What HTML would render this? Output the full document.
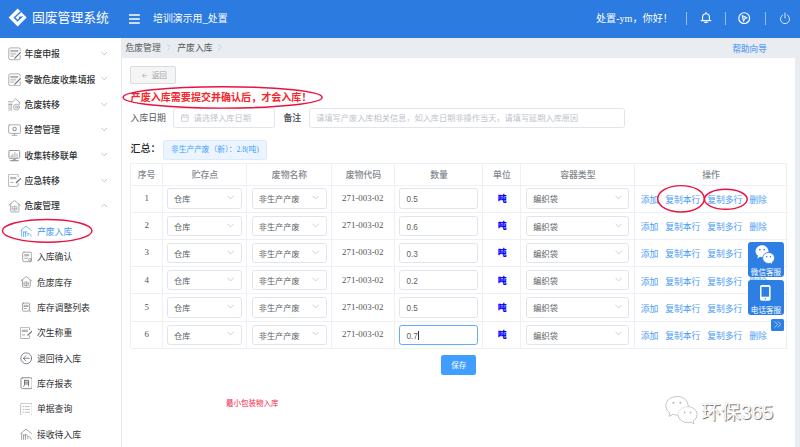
<!DOCTYPE html>
<html lang="zh-CN"><head>
<meta charset="utf-8">
<title>固废管理系统</title>
<style>
*{box-sizing:border-box;margin:0;padding:0}
html,body{width:800px;height:447px;overflow:hidden;background:#fff}
body{position:relative;font-family:"Liberation Sans","Noto Sans CJK SC",sans-serif;color:#333;font-size:8.9px;-webkit-font-smoothing:antialiased}
.serif{font-family:"Liberation Serif","Noto Sans CJK SC",sans-serif}
.abs{position:absolute}
/* header */
#hd{position:absolute;left:0;top:0;width:800px;height:37.6px;background:#2c7be0;color:#fff}
#hd .title{position:absolute;left:32px;top:0;line-height:36.6px;font-size:12.8px;font-weight:400;white-space:nowrap}
#hd .sys{position:absolute;left:153px;top:0;line-height:38.4px;font-size:9.9px;white-space:nowrap}
#hd .user{position:absolute;left:596px;top:0;line-height:37.4px;font-size:10.1px;white-space:nowrap}
#hd .dv{position:absolute;top:12.4px;width:1px;height:12.4px;background:rgba(255,255,255,.5)}
/* sidebar */
#sb{position:absolute;left:0;top:37.6px;width:122px;height:410px;background:#fff;border-right:1px solid #e6e9ee}
.mi{position:absolute;left:0;width:121px;height:25.37px;line-height:25.37px;font-size:8.85px;font-weight:500;color:#303133;white-space:nowrap}
.mi .tx{position:absolute;left:24.6px;top:1.1px}
.mi svg.ic{position:absolute;left:7.6px;top:6.2px;width:13.4px;height:13.4px}
.mi svg.ch{position:absolute;left:100.9px;top:9.7px;width:6.4px;height:5px}
.mi.sub{font-weight:400}
.mi.sub .tx{left:36.9px}
.mi.sub svg.ic{left:19.6px;top:6.5px;width:12.6px;height:12.6px}
.mi.act{color:#4495f3}
/* breadcrumb */
#bc{position:absolute;left:122px;top:37.6px;width:678px;height:20.2px;background:#e9edf2}
#bc span{position:absolute;top:0;line-height:21.2px;font-size:8.8px;color:#555;white-space:nowrap}
#bc .sep{color:#b8bcc4;font-size:8px}
#rs{position:absolute;left:795px;top:57.8px;width:5.6px;height:390px;background:#e9edf2}
/* content */
.btn-back{position:absolute;left:130.3px;top:66.4px;width:46.2px;height:17.7px;border:1px solid #dcdcdc;border-radius:2px;background:#f5f5f5;color:#a0a3a8;font-size:7.6px;line-height:15.6px;text-align:center;white-space:nowrap}
.warn{position:absolute;left:130.6px;top:88.5px;line-height:18px;font-size:10.05px;font-weight:700;color:#f8262a;white-space:nowrap}
.lb{position:absolute;font-size:8.85px;color:#53565c;font-weight:400;white-space:nowrap;line-height:20px}
.inp{position:absolute;height:20.4px;border:1px solid #e1e4ea;border-radius:2.6px;background:#fff;font-size:8.2px;line-height:19.8px;color:#c0c4cc;white-space:nowrap;overflow:hidden}
.sum{position:absolute;left:130.4px;top:138.5px;line-height:20px;font-size:10px;font-weight:500;color:#222;white-space:nowrap}
.tag{position:absolute;left:163px;top:139.8px;width:104px;height:20px;border:1px solid #d9ecff;background:#ecf5ff;border-radius:2.4px;color:#409eff;font-size:7.7px;line-height:18.6px;text-align:center;white-space:nowrap}
/* table */
#tb{position:absolute;left:129.5px;top:163.4px;width:657px;height:185px;border-top:1px solid #eceff4;border-left:1px solid #eceff4}
.vl{position:absolute;top:0;width:1px;height:185px;background:#eef0f5}
.hl{position:absolute;left:0;width:657px;height:1px;background:#eef0f5}
.th{position:absolute;top:0.6px;height:21px;line-height:21px;font-size:8.85px;color:#85888e;font-weight:500;text-align:center;white-space:nowrap}
.row{position:absolute;left:0;width:657px;height:27.24px}
.row .c{position:absolute;top:0;height:27.24px;line-height:27.24px;text-align:center;font-size:8.9px;color:#555;white-space:nowrap}
.sel,.num{position:absolute;top:3.6px;height:20.2px;border:1px solid #e1e4ea;border-radius:2.8px;background:#fff;font-size:8.2px;line-height:22.4px;color:#5c5f66;text-align:left;padding-left:6px;white-space:nowrap}
.sel svg{position:absolute;right:6.8px;top:5.8px;width:7.2px;height:5px}
.num{font-family:"Liberation Sans",sans-serif;padding-left:6.1px;line-height:21.6px}
.num.foc{border-color:#62adfb}
.ton{position:absolute;top:0;line-height:28.8px;font-size:8.9px;font-weight:900;color:#0808ff;text-align:center}
.lk{position:absolute;top:0;line-height:30.4px;font-size:8.8px;color:#4a9bf5;white-space:nowrap}
.save{position:absolute;left:441.2px;top:355.2px;width:35px;height:20.2px;border-radius:2.2px;background:#409eff;color:#fff;font-size:7.5px;line-height:21px;text-align:center}
.note{position:absolute;left:226px;top:396.9px;line-height:14px;font-size:7.5px;color:#f2254a;white-space:nowrap}
.fl{position:absolute;left:748.4px;width:35.2px;height:35px;background:#2d7fe3;border-radius:3px;color:#fff;font-size:7.6px;text-align:center;white-space:nowrap}
.fl span{position:absolute;left:0;width:100%;bottom:-1.5px;line-height:10.4px}
.wm{position:absolute;left:701.3px;top:398.4px;line-height:28px;font-size:19.6px;color:#fff;white-space:nowrap;text-shadow:1px 1px 0.700px #727272,0 0 0.800px #bdbdbd}
</style>
</head>
<body>
<!-- header -->
<div id="hd">
  <svg class="abs" style="left:8px;top:8px;width:20px;height:20px" viewBox="0 0 20 20"><path d="M9.6 0.6 18.6 9.6 9.6 18.6 0.6 9.6Z" fill="#fff"></path><path d="M12.7 3.7 6.5 9.5 9.5 12.7 13.3 9.2 10.9 9.4" fill="none" stroke="#2c7be0" stroke-width="1.45"></path></svg>
  <div class="title">固废管理系统</div>
  <svg class="abs" style="left:129.4px;top:13.8px;width:10.8px;height:10px" viewBox="0 0 10.8 10"><path d="M0 1h10.8M0 5h10.8M0 9h10.8" stroke="#fff" stroke-width="1.5"></path></svg>
  <div class="sys">培训演示用_处置</div>
  <div class="user serif">处置-ym，你好！</div>
  <div class="dv" style="left:685.5px"></div>
  <div class="dv" style="left:724.6px"></div>
  <div class="dv" style="left:765.2px"></div>
  <svg class="abs" style="left:699.7px;top:11.4px;width:12px;height:13px" viewBox="0 0 12 13"><path d="M1.2 9.6h9.6M2.6 9.4V6.1a3.4 3.4 0 0 1 6.8 0v3.3M6 1.2v1.4M4.8 11.4h2.4" fill="none" stroke="#fff" stroke-width="1.1" stroke-linecap="round"></path></svg>
  <svg class="abs" style="left:738.4px;top:11.6px;width:12.4px;height:12.4px" viewBox="0 0 12.4 12.4"><circle cx="6.2" cy="6.2" r="5.4" fill="none" stroke="#fff" stroke-width="1.150"></circle><path d="M4.100 3.500 9.300 5.800 6.600 6.700 5.600 9.500Z" fill="rgba(255,255,255,.35)" stroke="#fff" stroke-width="1" stroke-linejoin="round"></path></svg>
  <svg class="abs" style="left:778.8px;top:11.6px;width:12px;height:12.4px" viewBox="0 0 12 12.4"><path d="M3.6 3.1a4.6 4.6 0 1 0 4.8 0M6 1v5" fill="none" stroke="#dbe8fa" stroke-width="1" stroke-linecap="round"></path></svg>
</div>

<!-- sidebar -->
<div id="sb"></div>
<div id="menu"><div class="mi" style="top:41.10px"><svg class="ic" viewBox="0 0 13.4 13.4" fill="none" stroke="#94979d" stroke-width="0.8" stroke-linecap="round" stroke-linejoin="round"><path d="M12.200 8.800v2.400a1.500 1.500 0 0 1-1.500 1.500H2.300a1.500 1.500 0 0 1-1.500-1.500V2.400a1.500 1.500 0 0 1 1.500-1.500h8.400a1.500 1.500 0 0 1 1.500 1.500v1"></path><path d="M2.700 3.500h7.200M2.700 4.700h7.200M2.700 6.900h5.200M2.700 9.100h3.200"></path><path d="M12.400 5.700 6.900 11.200" stroke-width="1.200" stroke="#6a6d73"></path></svg><span class="tx">年度申报</span><svg class="ch" viewBox="0 0 6.4 5" fill="none" stroke="#b4b8bf" stroke-width="0.8"><path d="M0.400 1 3.200 3.800 6 1"></path></svg></div><div class="mi" style="top:66.47px"><svg class="ic" viewBox="0 0 13.4 13.4" fill="none" stroke="#94979d" stroke-width="0.8" stroke-linecap="round" stroke-linejoin="round"><path d="M12.200 8.800v2.400a1.500 1.500 0 0 1-1.500 1.500H2.300a1.500 1.500 0 0 1-1.500-1.500V2.400a1.500 1.500 0 0 1 1.500-1.500h8.400a1.500 1.500 0 0 1 1.500 1.500v1"></path><path d="M2.700 3.500h7.200M2.700 4.700h7.200M2.700 6.900h5.200M2.700 9.100h3.200"></path><path d="M12.400 5.700 6.900 11.200" stroke-width="1.200" stroke="#6a6d73"></path></svg><span class="tx">零散危废收集填报</span><svg class="ch" viewBox="0 0 6.4 5" fill="none" stroke="#b4b8bf" stroke-width="0.8"><path d="M0.400 1 3.200 3.800 6 1"></path></svg></div><div class="mi" style="top:91.84px"><svg class="ic" viewBox="0 0 13.4 13.4" fill="none" stroke="#94979d" stroke-width="0.8" stroke-linecap="round" stroke-linejoin="round"><path d="M0.400 3.800h4.200L7.650 0.800 11.900 4.700M11.300 4.400v2M0.700 6.200h3.400"></path><path d="M0.900 6.200v6.200M2.200 6.200v6.200M3.500 6.200v6.200" stroke-width="0.550"></path><circle cx="8.500" cy="9.200" r="2.900"></circle><circle cx="8.500" cy="9.200" r="1"></circle></svg><span class="tx">危废转移</span><svg class="ch" viewBox="0 0 6.4 5" fill="none" stroke="#b4b8bf" stroke-width="0.8"><path d="M0.400 1 3.200 3.800 6 1"></path></svg></div><div class="mi" style="top:117.21px"><svg class="ic" viewBox="0 0 13.4 13.4" fill="none" stroke="#94979d" stroke-width="0.8" stroke-linecap="round" stroke-linejoin="round"><rect x="0.650" y="1.850" width="11.750" height="8.500" rx="0.800"></rect><circle cx="6.600" cy="6" r="1.700" stroke-width="1.100"></circle><path d="M6.500 10.400v1.800M4 12.300h5"></path></svg><span class="tx">经营管理</span><svg class="ch" viewBox="0 0 6.4 5" fill="none" stroke="#b4b8bf" stroke-width="0.8"><path d="M0.400 1 3.200 3.800 6 1"></path></svg></div><div class="mi" style="top:142.58px"><svg class="ic" viewBox="0 0 13.4 13.4" fill="none" stroke="#94979d" stroke-width="0.8" stroke-linecap="round" stroke-linejoin="round"><rect x="0.900" y="1.500" width="10.800" height="7.800" rx="1" stroke-width="1"></rect><path d="M3.200 8.200V6.600M4.900 8.200V5.400M6.900 8.200V3.600M9 8.200V5"></path><path d="M5.200 10.200h2.400M2.600 11.600h7.600" stroke-width="1.100"></path></svg><span class="tx">收集转移联单</span><svg class="ch" viewBox="0 0 6.4 5" fill="none" stroke="#b4b8bf" stroke-width="0.8"><path d="M0.400 1 3.200 3.800 6 1"></path></svg></div><div class="mi" style="top:167.95px"><svg class="ic" viewBox="0 0 13.4 13.4" fill="none" stroke="#94979d" stroke-width="0.8" stroke-linecap="round" stroke-linejoin="round"><path d="M10.200 9.400v1.600a1.400 1.400 0 0 1-1.400 1.400H1.700a1.400 1.400 0 0 1-1.400-1.400V1.600a1.400 1.400 0 0 1 1.400-1.400h7.100a1.400 1.400 0 0 1 1.400 1.400v1.200"></path><path d="M2.400 3.400h5.500M2.400 4.700h5.500M2.600 8.400h2.400"></path><path d="M12.600 4.600 8.400 8.600" stroke-width="1.300" stroke="#6a6d73"></path></svg><span class="tx">应急转移</span><svg class="ch" viewBox="0 0 6.4 5" fill="none" stroke="#b4b8bf" stroke-width="0.8"><path d="M0.400 1 3.200 3.800 6 1"></path></svg></div><div class="mi" style="top:193.32px"><svg class="ic" viewBox="0 0 13.4 13.4" fill="none" stroke="#94979d" stroke-width="0.8" stroke-linecap="round" stroke-linejoin="round"><path d="M0.900 5.100 6.600 0.600 12.200 5.100M2.700 4.400v6.600a1 1 0 0 0 1 1h6.200a1 1 0 0 0 1-1V4.400"></path><path d="M4.600 6.600h4.200v3.400h-4.200zM4.600 8.400h4.200M6.700 5.800v4.800" stroke-width="0.600"></path></svg><span class="tx">危废管理</span><svg class="ch" viewBox="0 0 6.4 5" fill="none" stroke="#b4b8bf" stroke-width="0.8"><path d="M0.400 4 3.200 1.200 6 4"></path></svg></div><div class="mi sub act" style="top:218.69px"><svg class="ic" viewBox="0 0 13.4 13.4" fill="none" stroke="#4a9bf0" stroke-width="0.8" stroke-linecap="round" stroke-linejoin="round"><path d="M0.800 5.800 6.400 1.200 12 5.800M1.800 5.800v6.400M3.800 7.400v4.800M5.800 7.400v4.800M3.800 7.400h4M7.800 9.200h1.400M7.800 10.800h1M10.400 9.400 12 12"></path></svg><span class="tx">产废入库</span></div><div class="mi sub" style="top:244.06px"><svg class="ic" viewBox="0 0 13.4 13.4" fill="none" stroke="#85888e" stroke-width="0.8" stroke-linecap="round" stroke-linejoin="round"><rect x="2.870" y="1.280" width="9.570" height="10.100" rx="1.400"></rect><path d="M5 3.930h4.460M5 5.100h4.460M5 7.650h2.870"></path><circle cx="10.600" cy="9.350" r="1.500" fill="#fff"></circle></svg><span class="tx">入库确认</span></div><div class="mi sub" style="top:269.43px"><svg class="ic" viewBox="0 0 13.4 13.4" fill="none" stroke="#85888e" stroke-width="0.8" stroke-linecap="round" stroke-linejoin="round"><path d="M0.900 5.100 6.600 0.600 12.200 5.100M2.700 4.400v6.600a1 1 0 0 0 1 1h6.200a1 1 0 0 0 1-1V4.400"></path><path d="M4.600 6.600h4.200v3.400h-4.200zM4.600 8.400h4.200M6.700 5.800v4.800" stroke-width="0.600"></path></svg><span class="tx">危废库存</span></div><div class="mi sub" style="top:294.80px"><svg class="ic" viewBox="0 0 13.4 13.4" fill="none" stroke="#85888e" stroke-width="0.8" stroke-linecap="round" stroke-linejoin="round"><rect x="2.600" y="2.200" width="7.600" height="8.600" rx="0.800"></rect><path d="M4.200 4.600h4.400M4.200 5.800h4.400M4.200 8h2.600M9.400 9.400 11.400 11.600"></path></svg><span class="tx">库存调整列表</span></div><div class="mi sub" style="top:320.17px"><svg class="ic" viewBox="0 0 13.4 13.4" fill="none" stroke="#85888e" stroke-width="0.8" stroke-linecap="round" stroke-linejoin="round"><path d="M10.200 9.400v1.600a1.400 1.400 0 0 1-1.400 1.400H1.700a1.400 1.400 0 0 1-1.400-1.400V1.600a1.400 1.400 0 0 1 1.400-1.400h7.100a1.400 1.400 0 0 1 1.400 1.400v1.200"></path><path d="M2.400 3.400h5.500M2.400 4.700h5.500M2.600 8.400h2.400"></path><path d="M12.600 4.600 8.400 8.600" stroke-width="1.300" stroke="#6a6d73"></path></svg><span class="tx">次生称重</span></div><div class="mi sub" style="top:345.54px"><svg class="ic" viewBox="0 0 13.4 13.4" fill="none" stroke="#85888e" stroke-width="0.8" stroke-linecap="round" stroke-linejoin="round"><g stroke="#6c6f75" stroke-width="0.900"><circle cx="6.700" cy="6.700" r="5.800"></circle><path d="M9.800 6.700H3.800M6 4.200 3.600 6.700 6 9.200"></path></g></svg><span class="tx">退回待入库</span></div><div class="mi sub" style="top:370.91px"><svg class="ic" viewBox="0 0 13.4 13.4" fill="none" stroke="#85888e" stroke-width="0.8" stroke-linecap="round" stroke-linejoin="round"><g stroke="#74777d"><rect x="1" y="0.800" width="12" height="11.600" rx="1.800" stroke-width="0.900"></rect><path d="M4.900 3.600h4.200v6M4.900 3.600v4.200c0 1-0.400 1.700-1 2.200M4.900 5.500h4.200M4.900 7.400h4.200" stroke="#55585e" stroke-width="0.850"></path></g></svg><span class="tx">库存报表</span></div><div class="mi sub" style="top:396.28px"><svg class="ic" viewBox="0 0 13.4 13.4" fill="none" stroke="#85888e" stroke-width="0.8" stroke-linecap="round" stroke-linejoin="round"><g stroke="#a9acb2"><rect x="0.600" y="0.300" width="12.400" height="12.900" rx="1.600"></rect><path d="M3 3.800h0.900M5.400 3.800h4.800M3 6.800h0.900M5.400 6.800h4.800M3 9.800h0.900M5.400 9.800h4.800"></path></g></svg><span class="tx">单据查询</span></div><div class="mi sub" style="top:421.65px"><svg class="ic" viewBox="0 0 13.4 13.4" fill="none" stroke="#85888e" stroke-width="0.8" stroke-linecap="round" stroke-linejoin="round"><path d="M0.800 5.800 6.400 1.200 12 5.800M1.800 5.800v6.400M3.800 7.400v4.800M5.800 7.400v4.800M3.800 7.400h4M7.800 9.200h1.400M7.800 10.800h1M10.400 9.400 12 12"></path></svg><span class="tx">接收待入库</span></div></div>

<!-- breadcrumb -->
<div id="bc">
  <span style="left:3.5px">危废管理</span><svg class="abs" style="left:44.6px;top:6.6px;width:3.6px;height:6.6px" viewBox="0 0 3.6 6.6"><path d="M0.400 0.400 3.200 3.300 0.400 6.200" fill="none" stroke="#bcc0c8" stroke-width="0.7"></path></svg>
  <span style="left:55.3px">产废入库</span><svg class="abs" style="left:96.4px;top:6.6px;width:3.6px;height:6.6px" viewBox="0 0 3.6 6.6"><path d="M0.400 0.400 3.200 3.300 0.400 6.200" fill="none" stroke="#bcc0c8" stroke-width="0.7"></path></svg>
  <span style="left:610.4px;color:#5c9ff5;font-size:8.6px;line-height:22.4px;font-weight:500">帮助向导</span>
</div>
<div id="rs"></div>

<!-- content -->
<div class="btn-back"><svg class="abs" style="left:10.600px;top:5.300px;width:5.400px;height:5.400px" viewBox="0 0 5.400 5.400"><path d="M5.200 2.700H0.500M2.500 0.500 0.400 2.700 2.500 4.900" fill="none" stroke="#a0a3a8" stroke-width="0.650"></path></svg><span style="position:absolute;left:20.400px;top:0.700px">返回</span></div>
<div class="warn">产废入库需要提交并确认后，才会入库！</div>
<div class="lb" style="left:130.6px;top:107.8px">入库日期</div>
<div class="inp" style="left:173.4px;top:107.5px;width:101.4px"><svg class="abs" style="left:6.400px;top:5.600px;width:7.800px;height:7.800px" viewBox="0 0 6.6 6.8"><rect x="0.4" y="1" width="5.8" height="5.4" rx="0.6" fill="none" stroke="#c0c4cc" stroke-width="0.7"></rect><path d="M0.4 2.8h5.8M2 0.2v1.4M4.6 0.2v1.4" stroke="#c0c4cc" stroke-width="0.7"></path></svg><span style="position:absolute;left:19.2px">请选择入库日期</span></div>
<div class="lb" style="left:283.4px;top:107.8px;font-weight:700;color:#5c5f65">备注</div>
<div class="inp" style="left:308.6px;top:107.5px;width:316.6px"><span style="position:absolute;left:6.6px">请填写产废入库相关信息，如入库日期非操作当天，请填写延期入库原因</span></div>

<div class="sum">汇总：</div>
<div class="tag serif">非生产产废（新）：2.8(吨)</div>

<div id="tb"><div class="vl" style="left:31.1px"></div><div class="vl" style="left:115.8px"></div><div class="vl" style="left:200.2px"></div><div class="vl" style="left:263.6px"></div><div class="vl" style="left:351.5px"></div><div class="vl" style="left:389.3px"></div><div class="vl" style="left:503.4px"></div><div class="vl" style="left:655.6px"></div><div class="th" style="left:0px;width:32.1px">序号</div><div class="th" style="left:32.1px;width:84.69999999999999px">贮存点</div><div class="th" style="left:116.8px;width:84.39999999999999px">废物名称</div><div class="th" style="left:201.2px;width:63.400000000000034px">废物代码</div><div class="th" style="left:264.6px;width:87.89999999999998px">数量</div><div class="th" style="left:352.5px;width:37.80000000000001px">单位</div><div class="th" style="left:390.3px;width:114.09999999999997px">容器类型</div><div class="th" style="left:504.4px;width:152.20000000000005px">操作</div><div class="hl" style="top:20.6px"></div><div class="row" style="top:20.50px"><div class="c serif" style="left:0;width:32.2px">1</div><div class="sel" style="left:36.6px;width:75px">仓库<svg viewBox="0 0 6.6 4.600" fill="none" stroke="#c0c4cc" stroke-width="0.75"><path d="M0.400 0.600 3.300 3.600 6.200 0.600"></path></svg></div><div class="sel" style="left:121.2px;width:75px">非生产产废<svg viewBox="0 0 6.6 4.600" fill="none" stroke="#c0c4cc" stroke-width="0.75"><path d="M0.400 0.600 3.300 3.600 6.200 0.600"></path></svg></div><div class="c serif" style="left:200.6px;width:63.4px">271-003-02</div><div class="num" style="left:268.9px;width:78.2px">0.5</div><div class="ton" style="left:353.1px;width:37.2px">吨</div><div class="sel" style="left:395.8px;width:103.2px">编织袋<svg viewBox="0 0 6.6 4.600" fill="none" stroke="#c0c4cc" stroke-width="0.75"><path d="M0.400 0.600 3.300 3.600 6.200 0.600"></path></svg></div><span class="lk" style="left:510.2px">添加</span><span class="lk" style="left:534.7px">复制本行</span><span class="lk" style="left:576.7px">复制多行</span><span class="lk" style="left:618.7px">删除</span></div><div class="hl" style="top:47.24px"></div><div class="row" style="top:47.74px"><div class="c serif" style="left:0;width:32.2px">2</div><div class="sel" style="left:36.6px;width:75px">仓库<svg viewBox="0 0 6.6 4.600" fill="none" stroke="#c0c4cc" stroke-width="0.75"><path d="M0.400 0.600 3.300 3.600 6.200 0.600"></path></svg></div><div class="sel" style="left:121.2px;width:75px">非生产产废<svg viewBox="0 0 6.6 4.600" fill="none" stroke="#c0c4cc" stroke-width="0.75"><path d="M0.400 0.600 3.300 3.600 6.200 0.600"></path></svg></div><div class="c serif" style="left:200.6px;width:63.4px">271-003-02</div><div class="num" style="left:268.9px;width:78.2px">0.6</div><div class="ton" style="left:353.1px;width:37.2px">吨</div><div class="sel" style="left:395.8px;width:103.2px">编织袋<svg viewBox="0 0 6.6 4.600" fill="none" stroke="#c0c4cc" stroke-width="0.75"><path d="M0.400 0.600 3.300 3.600 6.200 0.600"></path></svg></div><span class="lk" style="left:510.2px">添加</span><span class="lk" style="left:534.7px">复制本行</span><span class="lk" style="left:576.7px">复制多行</span><span class="lk" style="left:618.7px">删除</span></div><div class="hl" style="top:74.48px"></div><div class="row" style="top:74.98px"><div class="c serif" style="left:0;width:32.2px">3</div><div class="sel" style="left:36.6px;width:75px">仓库<svg viewBox="0 0 6.6 4.600" fill="none" stroke="#c0c4cc" stroke-width="0.75"><path d="M0.400 0.600 3.300 3.600 6.200 0.600"></path></svg></div><div class="sel" style="left:121.2px;width:75px">非生产产废<svg viewBox="0 0 6.6 4.600" fill="none" stroke="#c0c4cc" stroke-width="0.75"><path d="M0.400 0.600 3.300 3.600 6.200 0.600"></path></svg></div><div class="c serif" style="left:200.6px;width:63.4px">271-003-02</div><div class="num" style="left:268.9px;width:78.2px">0.3</div><div class="ton" style="left:353.1px;width:37.2px">吨</div><div class="sel" style="left:395.8px;width:103.2px">编织袋<svg viewBox="0 0 6.6 4.600" fill="none" stroke="#c0c4cc" stroke-width="0.75"><path d="M0.400 0.600 3.300 3.600 6.200 0.600"></path></svg></div><span class="lk" style="left:510.2px">添加</span><span class="lk" style="left:534.7px">复制本行</span><span class="lk" style="left:576.7px">复制多行</span><span class="lk" style="left:618.7px">删除</span></div><div class="hl" style="top:101.72px"></div><div class="row" style="top:102.22px"><div class="c serif" style="left:0;width:32.2px">4</div><div class="sel" style="left:36.6px;width:75px">仓库<svg viewBox="0 0 6.6 4.600" fill="none" stroke="#c0c4cc" stroke-width="0.75"><path d="M0.400 0.600 3.300 3.600 6.200 0.600"></path></svg></div><div class="sel" style="left:121.2px;width:75px">非生产产废<svg viewBox="0 0 6.6 4.600" fill="none" stroke="#c0c4cc" stroke-width="0.75"><path d="M0.400 0.600 3.300 3.600 6.200 0.600"></path></svg></div><div class="c serif" style="left:200.6px;width:63.4px">271-003-02</div><div class="num" style="left:268.9px;width:78.2px">0.2</div><div class="ton" style="left:353.1px;width:37.2px">吨</div><div class="sel" style="left:395.8px;width:103.2px">编织袋<svg viewBox="0 0 6.6 4.600" fill="none" stroke="#c0c4cc" stroke-width="0.75"><path d="M0.400 0.600 3.300 3.600 6.200 0.600"></path></svg></div><span class="lk" style="left:510.2px">添加</span><span class="lk" style="left:534.7px">复制本行</span><span class="lk" style="left:576.7px">复制多行</span><span class="lk" style="left:618.7px">删除</span></div><div class="hl" style="top:128.96px"></div><div class="row" style="top:129.46px"><div class="c serif" style="left:0;width:32.2px">5</div><div class="sel" style="left:36.6px;width:75px">仓库<svg viewBox="0 0 6.6 4.600" fill="none" stroke="#c0c4cc" stroke-width="0.75"><path d="M0.400 0.600 3.300 3.600 6.200 0.600"></path></svg></div><div class="sel" style="left:121.2px;width:75px">非生产产废<svg viewBox="0 0 6.6 4.600" fill="none" stroke="#c0c4cc" stroke-width="0.75"><path d="M0.400 0.600 3.300 3.600 6.200 0.600"></path></svg></div><div class="c serif" style="left:200.6px;width:63.4px">271-003-02</div><div class="num" style="left:268.9px;width:78.2px">0.5</div><div class="ton" style="left:353.1px;width:37.2px">吨</div><div class="sel" style="left:395.8px;width:103.2px">编织袋<svg viewBox="0 0 6.6 4.600" fill="none" stroke="#c0c4cc" stroke-width="0.75"><path d="M0.400 0.600 3.300 3.600 6.200 0.600"></path></svg></div><span class="lk" style="left:510.2px">添加</span><span class="lk" style="left:534.7px">复制本行</span><span class="lk" style="left:576.7px">复制多行</span><span class="lk" style="left:618.7px">删除</span></div><div class="hl" style="top:156.20px"></div><div class="row" style="top:156.70px"><div class="c serif" style="left:0;width:32.2px">6</div><div class="sel" style="left:36.6px;width:75px">仓库<svg viewBox="0 0 6.6 4.600" fill="none" stroke="#c0c4cc" stroke-width="0.75"><path d="M0.400 0.600 3.300 3.600 6.200 0.600"></path></svg></div><div class="sel" style="left:121.2px;width:75px">非生产产废<svg viewBox="0 0 6.6 4.600" fill="none" stroke="#c0c4cc" stroke-width="0.75"><path d="M0.400 0.600 3.300 3.600 6.200 0.600"></path></svg></div><div class="c serif" style="left:200.6px;width:63.4px">271-003-02</div><div class="num foc" style="left:268.9px;width:78.2px">0.7<span style="display:inline-block;width:0.7px;height:9px;background:#333;vertical-align:-1.4px"></span></div><div class="ton" style="left:353.1px;width:37.2px">吨</div><div class="sel" style="left:395.8px;width:103.2px">编织袋<svg viewBox="0 0 6.6 4.600" fill="none" stroke="#c0c4cc" stroke-width="0.75"><path d="M0.400 0.600 3.300 3.600 6.200 0.600"></path></svg></div><span class="lk" style="left:510.2px">添加</span><span class="lk" style="left:534.7px">复制本行</span><span class="lk" style="left:576.7px">复制多行</span><span class="lk" style="left:618.7px">删除</span></div><div class="hl" style="top:183.44px"></div></div>

<div class="save">保存</div>
<div class="note">最小包装物入库</div>

<!-- floating widgets -->
<div class="fl" style="top:241.8px">
  <svg class="abs" style="left:0;top:-0.400px;width:35.200px;height:25.700px" preserveAspectRatio="none" viewBox="0 0 35.200 24"><path d="M14.050 3.900c-3.560 0-6.450 2.500-6.450 5.600 0 1.750 0.930 3.300 2.400 4.350l-0.700 2.450 2.700-1.500c0.650 0.200 1.350 0.300 2.050 0.300 3.560 0 6.450-2.500 6.450-5.600s-2.890-5.600-6.450-5.600Z" fill="#fff"></path><circle cx="11.900" cy="8" r="0.800" fill="#2d7fe3"></circle><circle cx="16.200" cy="8" r="0.800" fill="#2d7fe3"></circle><path d="M20.600 10.700c-3.300 0-5.950 2.300-5.950 5.150s2.650 5.150 5.950 5.150c0.650 0 1.250-0.100 1.850-0.250l2.300 1.300-0.600-2.050c1.450-0.950 2.400-2.450 2.400-4.150 0-2.850-2.650-5.150-5.950-5.150Z" fill="#fff" stroke="#2d7fe3" stroke-width="0.800"></path><circle cx="18.700" cy="14.700" r="0.750" fill="#2d7fe3"></circle><circle cx="22.500" cy="14.700" r="0.750" fill="#2d7fe3"></circle></svg>
  <span>微信客服</span>
</div>
<div class="fl" style="top:280px">
  <svg class="abs" style="left:11.800px;top:5.200px;width:10.600px;height:15.800px" viewBox="0 0 10.600 15.800"><rect x="0" y="0" width="10.600" height="15.800" rx="1.800" fill="#fff"></rect><rect x="1.500" y="1.900" width="7.600" height="9.800" fill="#2d7fe3"></rect><circle cx="5.300" cy="13.700" r="0.700" fill="#2d7fe3"></circle></svg>
  <span>电话客服</span>
</div>
<div class="abs" style="left:771.2px;top:318.6px;width:12.4px;height:12.4px;background:#2d7fe3;border-radius:1.6px"><svg class="abs" style="left:2.6px;top:2.8px;width:7.4px;height:6.8px" viewBox="0 0 7.4 6.8"><path d="M0.600 0.400 3.600 3.400 0.600 6.400M3.800 0.400 6.800 3.400 3.800 6.400" fill="none" stroke="#cfe2fb" stroke-width="0.8"></path></svg></div>

<!-- annotations -->
<svg class="abs" style="left:0;top:0;width:800px;height:447px;pointer-events:none" viewBox="0 0 800 447">
  <g fill="none" stroke="#ea1240" stroke-width="1.450">
    <ellipse cx="47.2" cy="230.8" rx="44.8" ry="11.4"></ellipse>
    <ellipse cx="222.600" cy="97.400" rx="99.500" ry="10.700"></ellipse>
    <ellipse cx="681" cy="198.800" rx="23.300" ry="13.200"></ellipse>
    <ellipse cx="725.800" cy="199.300" rx="21.400" ry="10"></ellipse>
  </g>
</svg>

<!-- watermark -->
<svg class="abs" style="left:664px;top:394px;width:36px;height:32px;filter:drop-shadow(0.900px 0.900px 0.500px #777)" viewBox="0 0 36 32">
  <g fill="#fff" stroke="#cfcfcf" stroke-width="0.500">
    <path d="M13 2.600C6.900 2.600 2 6.700 2 11.800c0 2.900 1.600 5.500 4.100 7.200l-1 3.300 3.800-2c1.300 0.400 2.700 0.600 4.100 0.600 6.100 0 11-4.100 11-9.200S19.100 2.600 13 2.600Z"></path>
    <path d="M23.600 12.800c-5.200 0-9.400 3.500-9.400 7.800s4.200 7.800 9.400 7.800c1.100 0 2.100-0.200 3.100-0.500l3.200 1.800-0.900-2.800c2.400-1.400 4-3.700 4-6.300 0-4.300-4.200-7.800-9.400-7.800Z"></path>
  </g>
  <g fill="#b5b5b5"><circle cx="9.4" cy="8.800" r="1"></circle><circle cx="16.400" cy="8.800" r="1"></circle><circle cx="20.600" cy="18.400" r="0.900"></circle><circle cx="26.600" cy="18.400" r="0.900"></circle></g>
</svg>
<div class="wm">环保365</div>




</body></html>
